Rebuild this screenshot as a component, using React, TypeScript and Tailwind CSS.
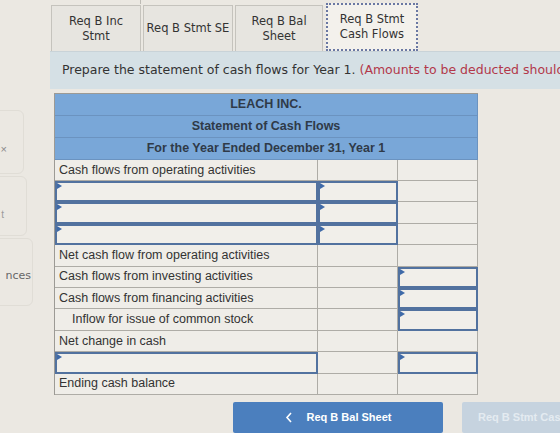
import React from "react";

type Cell = { input?: boolean };
type Row = { label?: string; indent?: boolean; c1?: boolean; c2?: boolean; c3?: boolean };

const rows: Row[] = [
  { label: "Cash flows from operating activities" },
  { c1: true, c2: true },
  { c1: true, c2: true },
  { c1: true, c2: true },
  { label: "Net cash flow from operating activities" },
  { label: "Cash flows from investing activities", c3: true },
  { label: "Cash flows from financing activities", c3: true },
  { label: "Inflow for issue of common stock", indent: true, c3: true },
  { label: "Net change in cash" },
  { c1: true, c3: true },
  { label: "Ending cash balance" },
];

function Marker() {
  return (
    <span className="absolute left-0 top-0 w-0 h-0 border-t-[3px] border-b-[3px] border-l-[5px] border-t-transparent border-b-transparent border-l-[#3f6aa8]" />
  );
}

function Box({ input, children, className }: Cell & { children?: React.ReactNode; className: string }) {
  if (input) {
    return (
      <div className={`${className} relative border-2 border-[#52729f] bg-[#f1efea]`}>
        <Marker />
      </div>
    );
  }
  return <div className={`${className} border-r border-b border-[#aeaca6] flex items-center`}>{children}</div>;
}

export default function App() {
  const tabBase =
    "h-[46px] flex items-center justify-center text-center text-[11.5px] leading-[15px] text-[#333] border border-b-0 border-[#c5c3bd] bg-[#e7e5e0]";
  return (
    <div
      className="w-[560px] h-[433px] overflow-hidden bg-[#ebe8e2] flex"
      style={{ fontFamily: '"Liberation Sans", Arial, sans-serif' }}
    >
      {/* side panel, clipped at the left edge */}
      <div className="w-[50px] shrink-0 overflow-hidden pt-[110px]">
        <div className="ml-[-40px] w-[64px] h-[64px] rounded-[6px] border border-[#e0ddd6] flex items-center justify-end pr-[16px]">
          <span className="text-[11px] text-[#8a8a8a] mt-[14px]">×</span>
        </div>
        <div className="ml-[-40px] w-[67px] h-[60px] rounded-[6px] border border-[#e0ddd6] mt-[2px] flex items-center justify-end pr-[22px]">
          <span className="text-[10px] text-[#9a9a9a] mt-[16px]">t</span>
        </div>
        <div className="ml-[-40px] w-[73px] h-[68px] rounded-[6px] border border-[#e0ddd6] mt-[2px] flex flex-col items-end pr-[38px] pt-[12px]">
          <span className="w-[10px] h-[14px] border-[1.5px] border-[#6f86a8] rounded-[2px] mr-[-3px]" />
          <span
            className="text-[11px] text-[#666] mt-[3px] mr-[-37px]"
            style={{ fontFamily: '"DejaVu Sans", Verdana, sans-serif' }}
          >
            nces
          </span>
        </div>
      </div>

      <div className="flex-1 flex flex-col">
        {/* tabs */}
        <div className="relative flex items-end gap-[2px] pt-[3px] ml-[1px]" style={{ fontFamily: '"DejaVu Sans", Verdana, sans-serif' }}>
          <span className="absolute left-[89px] top-0 w-px h-[4px] bg-[#bdbbb5]" />
          <div className={`${tabBase} w-[90px] mt-[1px]`}>
            Req B Inc
            <br />
            Stmt
          </div>
          <div className={`${tabBase} w-[90px]`}>Req B Stmt SE</div>
          <div className={`${tabBase} w-[88px]`}>
            Req B Bal
            <br />
            Sheet
          </div>
          <div className="w-[92px] h-[48px] ml-[1px] flex items-center justify-center text-center text-[11.5px] leading-[15px] text-[#333] border-2 border-dotted border-[#6a78a3] bg-[#f3f1ec]">
            Req B Stmt
            <br />
            Cash Flows
          </div>
        </div>

        {/* instruction banner */}
        <div
          className="h-[38px] bg-[#d5e0e5] flex items-center pl-[12px] whitespace-nowrap overflow-hidden text-[12.5px] text-[#333] border-t border-[#c9d3d8]"
          style={{ fontFamily: '"DejaVu Sans", Verdana, sans-serif' }}
        >
          Prepare the statement of cash flows for Year 1.&nbsp;
          <span className="text-[#b2384a]">(Amounts to be deducted should be indicated with a minus sign.)</span>
        </div>

        {/* statement table */}
        <div className="mt-[4px] ml-[4px] w-[424px] border-l border-t border-[#9c9a95] text-[12.5px] text-[#333]">
          {["LEACH INC.", "Statement of Cash Flows", "For the Year Ended December 31, Year 1"].map((t) => (
            <div
              key={t}
              className="h-[22px] bg-[#79a7d8] border-r border-b border-[#6b93c0] flex items-center justify-center font-bold text-[12.5px] text-[#2f3a48]"
            >
              {t}
            </div>
          ))}
          {rows.map((r, i) => (
            <div key={i} className="flex h-[21.4px] bg-[#efede8]">
              <Box input={r.c1} className="w-[264px]">
                {r.label && (
                  <span className={`${r.indent ? "pl-[17px]" : "pl-[4px]"} whitespace-nowrap`}>{r.label}</span>
                )}
              </Box>
              <Box input={r.c2} className="w-[80px]" />
              <Box input={r.c3} className="w-[80px]" />
            </div>
          ))}
        </div>

        {/* navigation */}
        <div className="flex mt-[7px] ml-[183px] gap-[19px]">
          <div className="w-[210px] h-[31px] bg-[#4b7fbe] rounded-[2px] flex items-center justify-center gap-[14px] text-white font-bold text-[11px]">
            <svg width="8" height="11" viewBox="0 0 8 11" fill="none">
              <path d="M6 1 L2 5.5 L6 10" stroke="white" strokeWidth="1.6" />
            </svg>
            <span>Req B Bal Sheet</span>
          </div>
          <div className="w-[120px] h-[31px] bg-[#c6d3df] rounded-[2px] flex items-center pl-[16px] text-[#e4ebf1] font-bold text-[11px] whitespace-nowrap overflow-hidden">
            Req B Stmt Cash Flows
          </div>
        </div>
      </div>
    </div>
  );
}
